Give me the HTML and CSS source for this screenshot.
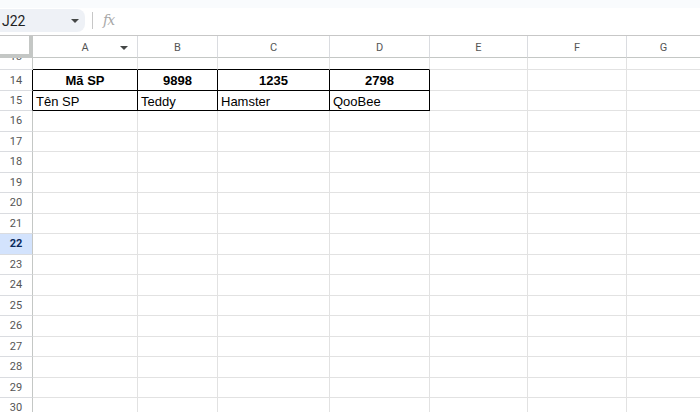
FILE: index.html
```html
<!DOCTYPE html>
<html>
<head>
<meta charset="utf-8">
<link rel="stylesheet" href="styles.css">
</head>
<body>
<div class="topstrip"></div>
<div class="formula-bar">
  <div class="namebox"><span class="ref">J22</span><span class="caret"></span></div>
  <div class="sep"></div>
  <div class="fx">fx</div>
</div>
<div class="sheet">
  <div class="corner"></div>
  <div class="ch">A<span class="colmenu"></span></div>
  <div class="ch">B</div>
  <div class="ch">C</div>
  <div class="ch">D</div>
  <div class="ch">E</div>
  <div class="ch">F</div>
  <div class="ch last">G</div>

  <div class="rh r13"><span>13</span></div>
  <div class="c top"></div><div class="c top"></div><div class="c top"></div><div class="c top"></div><div class="c"></div><div class="c"></div><div class="c last"></div>

  <div class="rh boxed">14</div>
  <div class="c box b">Mã SP</div><div class="c box b">9898</div><div class="c box b">1235</div><div class="c box b">2798</div><div class="c"></div><div class="c"></div><div class="c last"></div>

  <div class="rh boxed">15</div>
  <div class="c box">Tên SP</div><div class="c box">Teddy</div><div class="c box">Hamster</div><div class="c box">QooBee</div><div class="c"></div><div class="c"></div><div class="c last"></div>

  <div class="rh">16</div><div class="c"></div><div class="c"></div><div class="c"></div><div class="c"></div><div class="c"></div><div class="c"></div><div class="c last"></div>
  <div class="rh">17</div><div class="c"></div><div class="c"></div><div class="c"></div><div class="c"></div><div class="c"></div><div class="c"></div><div class="c last"></div>
  <div class="rh">18</div><div class="c"></div><div class="c"></div><div class="c"></div><div class="c"></div><div class="c"></div><div class="c"></div><div class="c last"></div>
  <div class="rh">19</div><div class="c"></div><div class="c"></div><div class="c"></div><div class="c"></div><div class="c"></div><div class="c"></div><div class="c last"></div>
  <div class="rh">20</div><div class="c"></div><div class="c"></div><div class="c"></div><div class="c"></div><div class="c"></div><div class="c"></div><div class="c last"></div>
  <div class="rh">21</div><div class="c"></div><div class="c"></div><div class="c"></div><div class="c"></div><div class="c"></div><div class="c"></div><div class="c last"></div>
  <div class="rh sel">22</div><div class="c"></div><div class="c"></div><div class="c"></div><div class="c"></div><div class="c"></div><div class="c"></div><div class="c last"></div>
  <div class="rh">23</div><div class="c"></div><div class="c"></div><div class="c"></div><div class="c"></div><div class="c"></div><div class="c"></div><div class="c last"></div>
  <div class="rh">24</div><div class="c"></div><div class="c"></div><div class="c"></div><div class="c"></div><div class="c"></div><div class="c"></div><div class="c last"></div>
  <div class="rh">25</div><div class="c"></div><div class="c"></div><div class="c"></div><div class="c"></div><div class="c"></div><div class="c"></div><div class="c last"></div>
  <div class="rh">26</div><div class="c"></div><div class="c"></div><div class="c"></div><div class="c"></div><div class="c"></div><div class="c"></div><div class="c last"></div>
  <div class="rh">27</div><div class="c"></div><div class="c"></div><div class="c"></div><div class="c"></div><div class="c"></div><div class="c"></div><div class="c last"></div>
  <div class="rh">28</div><div class="c"></div><div class="c"></div><div class="c"></div><div class="c"></div><div class="c"></div><div class="c"></div><div class="c last"></div>
  <div class="rh">29</div><div class="c"></div><div class="c"></div><div class="c"></div><div class="c"></div><div class="c"></div><div class="c"></div><div class="c last"></div>
  <div class="rh">30</div><div class="c"></div><div class="c"></div><div class="c"></div><div class="c"></div><div class="c"></div><div class="c"></div><div class="c last"></div>
</div>
</body>
</html>
```
FILE: styles.css
```css
* { box-sizing: border-box; }
html, body { margin: 0; padding: 0; }
body {
  width: 700px;
  height: 412px;
  overflow: hidden;
  background: #ffffff;
  font-family: "Liberation Sans", Arial, sans-serif;
}
.topstrip {
  height: 8px;
  background: #f9fbfd;
}
.formula-bar {
  height: 28px;
  display: flex;
  align-items: center;
  border-bottom: 1px solid #c7c7c7;
  background: #ffffff;
}
.namebox {
  width: 85px;
  height: 23px;
  background: #eef1f6;
  border-radius: 0 8px 8px 0;
  display: flex;
  align-items: center;
  justify-content: space-between;
  padding: 0 6px 0 2px;
  margin-top: -2px;
}
.ref {
  font-family: Roboto, "Liberation Sans", sans-serif;
  font-size: 14px;
  color: #1f1f1f;
}
.caret {
  width: 0;
  height: 0;
  border-left: 4px solid transparent;
  border-right: 4px solid transparent;
  border-top: 4px solid #444746;
}
.sep {
  width: 1px;
  height: 17px;
  background: #c7c7c7;
  margin-left: 7px;
  margin-top: -2px;
}
.fx {
  margin-left: 10px;
  margin-top: -3px;
  font-family: "DejaVu Serif", "Liberation Serif", serif;
  font-style: italic;
  font-size: 14px;
  color: #a8a8a8;
  letter-spacing: -1px;
}
.sheet {
  display: grid;
  grid-template-columns: 33px 105px 80px 112px 100px 98px 99px 73px;
  grid-template-rows: 22px 12px 21px 20px repeat(15, 20.5px);
}
.corner {
  background: #ffffff;
  border-right: 4px solid #c4c7c5;
  border-bottom: 4px solid #c4c7c5;
  box-shadow: inset 0 0 0 0 #fff;
}
.ch {
  position: relative;
  border-right: 1px solid #dadce0;
  border-bottom: 1px solid #c4c7c5;
  display: flex;
  align-items: center;
  justify-content: center;
  font-family: Roboto, "Liberation Sans", sans-serif;
  font-size: 11px;
  color: #555;
  padding-top: 1px;
}
.ch.last { border-right: none; }
.colmenu {
  position: absolute;
  right: 9px;
  top: 10px;
  width: 0;
  height: 0;
  border-left: 4px solid transparent;
  border-right: 4px solid transparent;
  border-top: 4px solid #444746;
}
.rh {
  border-right: 1px solid #c4c7c5;
  border-bottom: 1px solid #dadce0;
  display: flex;
  align-items: center;
  justify-content: center;
  font-family: Roboto, "Liberation Sans", sans-serif;
  font-size: 11px;
  color: #555;
  overflow: hidden;
}
.rh.r13 {
  align-items: flex-start;
}
.rh.r13 span {
  display: block;
  line-height: 11px;
  margin-top: -7px;
}
.rh.boxed { border-right: 1px solid #000; }
.rh.sel {
  background: #d3e3fd;
  color: #0b2a5c;
  font-weight: bold;
}
.c {
  border-right: 1px solid #e2e2e2;
  border-bottom: 1px solid #e2e2e2;
  font-size: 13px;
  color: #000;
  display: flex;
  align-items: center;
  padding: 1px 3px 0 3px;
  white-space: nowrap;
  overflow: hidden;
}
.c.last { border-right: none; }
.c.top { border-bottom: 1px solid #000; }
.c.box {
  border-right: 1px solid #000;
  border-bottom: 1px solid #000;
}
.c.b {
  font-weight: bold;
  justify-content: center;
}
```
